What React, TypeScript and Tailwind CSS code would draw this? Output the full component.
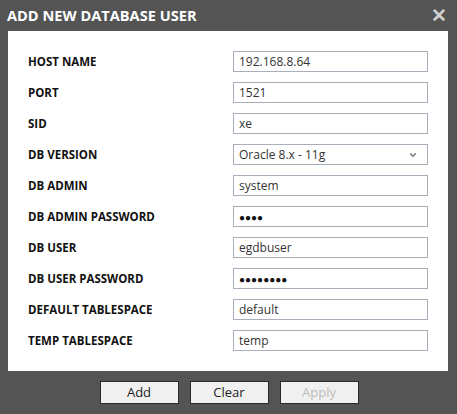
import { ChevronDown } from 'lucide-react'

type Field = {
  label: string
  value: string
  kind?: 'text' | 'password' | 'select'
}

const FIELDS: Field[] = [
  { label: 'HOST NAME', value: '192.168.8.64' },
  { label: 'PORT', value: '1521' },
  { label: 'SID', value: 'xe' },
  { label: 'DB VERSION', value: 'Oracle 8.x - 11g', kind: 'select' },
  { label: 'DB ADMIN', value: 'system' },
  { label: 'DB ADMIN PASSWORD', value: '●●●●', kind: 'password' },
  { label: 'DB USER', value: 'egdbuser' },
  { label: 'DB USER PASSWORD', value: '●●●●●●●●', kind: 'password' },
  { label: 'DEFAULT TABLESPACE', value: 'default' },
  { label: 'TEMP TABLESPACE', value: 'temp' },
]

const font = { fontFamily: '"Open Sans", "Liberation Sans", sans-serif' }

export default function App() {
  return (
    <div className="w-[457px] h-[414px] bg-[#545454] flex flex-col" style={font}>
      {/* title bar */}
      <div className="h-[31px] flex items-center justify-between pl-[7px] pr-[10px]">
        <h1 className="text-[14.6px] font-bold text-white leading-none">
          ADD NEW DATABASE USER
        </h1>
        <span className="text-[#cfcfcf] text-[19px] font-bold leading-none">✕</span>
      </div>

      {/* form body */}
      <div className="mx-2 w-[440px] bg-white pt-5 pb-5 pl-5 flex flex-col gap-[10px]">
        {FIELDS.map((f) => (
          <div key={f.label} className="flex items-center h-[21px]">
            <label className="w-[205px] text-[11.5px] font-bold text-[#111] leading-none">
              {f.label}
            </label>
            <div className="w-[195px] h-[21px] border border-[#a9aebb] flex items-center justify-between pl-[5px] pr-[9px]">
              {f.kind === 'password' ? (
                <span className="text-[10px] text-[#111] leading-none">{f.value}</span>
              ) : (
                <span className="text-[12px] text-[#333] leading-none">{f.value}</span>
              )}
              {f.kind === 'select' && (
                <ChevronDown size={10} strokeWidth={3.5} className="text-[#777]" />
              )}
            </div>
          </div>
        ))}
      </div>

      {/* buttons */}
      <div className="flex justify-center gap-[11px] mt-[10px] pl-[2px] pr-[1px]">
        <button className="w-[79px] h-[23px] bg-[#f0f0f0] border border-[#2a2a2a] text-[13px] text-[#222]">
          Add
        </button>
        <button className="w-[79px] h-[23px] bg-[#f0f0f0] border border-[#2a2a2a] text-[13px] text-[#222]">
          Clear
        </button>
        <button className="w-[79px] h-[23px] bg-[#f0f0f0] border border-[#2a2a2a] text-[13px] text-[#bcbcbc]" disabled>
          Apply
        </button>
      </div>
    </div>
  )
}
